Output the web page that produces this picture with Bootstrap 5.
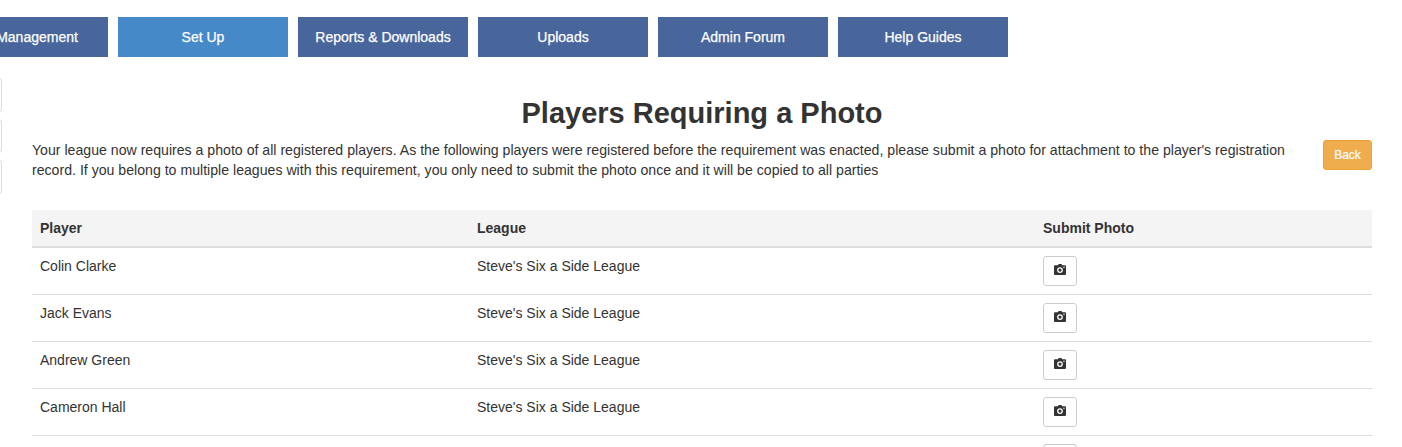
<!DOCTYPE html>
<html lang="en">
<head>
<meta charset="utf-8">
<title>Players Requiring a Photo</title>
<link rel="stylesheet" href="https://cdn.jsdelivr.net/npm/bootstrap@5.3.0/dist/css/bootstrap.min.css">
<style>
html, body { height: 447px; overflow: hidden; }
body { font-family: "Liberation Sans", Arial, sans-serif; font-size: 14px; line-height: 20px; color: #333; background: #fff; }
.top-menu { padding-top: 17px; margin-left: -62px; gap: 10px; }
.menu-btn { width: 170px; height: 40px; line-height: 40px; padding: 0; border: 0; border-radius: 0; font-size: 14px; color: #fff; background: #48659c; text-decoration: none; text-align: center; -webkit-text-stroke: .25px #fff; }
.menu-btn.is-clipped { padding-left: 28px; }
.menu-btn.is-current { background: #4689c8; }
.side-stubs { width: 1px; padding-top: 21px; gap: 7px; flex: none; }
.side-stub { width: 12px; height: 34px; margin-left: -10px; border: 1px solid #ddd; border-radius: 3px; background: #fff; }
.page-body { margin-left: 31px; width: 1340px; flex: none; }
.page-title { font-size: 29px; line-height: 33px; font-weight: 700; color: #333; margin: 40px 0 10px; text-align: center; }
.intro-text { width: 1270px; margin: 0; height: 70px; color: #333; font-size: 14.14px; }
.back-btn { width: 49px; height: 30px; padding: 0; font-size: 12px; line-height: 28px; color: #fff; background: #f0ad4e; border: 1px solid #eea236; border-radius: 3px; -webkit-text-stroke: .2px #fff; }
.photo-table { table-layout: fixed; width: 1340px; margin: 0; color: #333; font-size: 14px; }
.photo-table th, .photo-table td { line-height: 20px; border-color: #ddd; color: #333; box-shadow: none; }
.photo-table thead th { padding: 8px; background: #f4f4f4; border-bottom: 2px solid #ddd; vertical-align: bottom; }
.photo-table tbody td { padding: 8px; height: 47px; vertical-align: top; border-top: 0; border-bottom: 1px solid #ddd; }
.photo-table .col-player { width: 437px; }
.photo-table .col-league { width: 566px; }
.photo-btn { width: 34px; height: 30px; padding: 0; background: #fff; border: 1px solid #ccc; border-radius: 3px; line-height: 1; }
.photo-btn svg { width: 12px; height: 11px; display: block; margin: -4px auto 0; fill: #333; }
</style>
</head>
<body>
<nav class="top-menu d-flex">
  <a class="btn menu-btn is-clipped" href="#">Management</a>
  <a class="btn menu-btn is-current" href="#">Set Up</a>
  <a class="btn menu-btn" href="#">Reports &amp; Downloads</a>
  <a class="btn menu-btn" href="#">Uploads</a>
  <a class="btn menu-btn" href="#">Admin Forum</a>
  <a class="btn menu-btn" href="#">Help Guides</a>
</nav>
<div class="d-flex">
  <div class="side-stubs d-flex flex-column">
    <div class="side-stub"></div>
    <div class="side-stub"></div>
    <div class="side-stub"></div>
  </div>
  <main class="page-body">
    <h1 class="page-title">Players Requiring a Photo</h1>
    <div class="d-flex justify-content-between align-items-start">
      <p class="intro-text">Your league now requires a photo of all registered players. As the following players were registered before the requirement was enacted, please submit a photo for attachment to the player's registration record. If you belong to multiple leagues with this requirement, you only need to submit the photo once and it will be copied to all parties</p>
      <button type="button" class="btn back-btn">Back</button>
    </div>
    <table class="table photo-table">
      <colgroup><col class="col-player"><col class="col-league"><col></colgroup>
      <thead><tr><th>Player</th><th>League</th><th>Submit Photo</th></tr></thead>
      <tbody>
        <tr><td>Colin Clarke</td><td>Steve's Six a Side League</td><td><button type="button" class="btn photo-btn" aria-label="Submit photo"><svg viewBox="0 0 12 11"><path fill-rule="evenodd" d="M4 1.2 4.7 0h2.8l.7 1.2h2.6c.6 0 1.2.5 1.2 1.2v7.3c0 .7-.6 1.3-1.2 1.3H1.2C.5 11 0 10.400 0 9.700V2.400c0-.7.5-1.200 1.200-1.200zM6 3.200a2.900 2.900 0 1 0 0 5.800 2.900 2.900 0 0 0 0-5.800zm0 1.300a1.600 1.600 0 1 1 0 3.200 1.600 1.600 0 0 1 0-3.200zm4-1.900a.7.7 0 1 0 0 1.400.7.7 0 0 0 0-1.400z"/></svg></button></td></tr>
        <tr><td>Jack Evans</td><td>Steve's Six a Side League</td><td><button type="button" class="btn photo-btn" aria-label="Submit photo"><svg viewBox="0 0 12 11"><path fill-rule="evenodd" d="M4 1.2 4.7 0h2.8l.7 1.2h2.6c.6 0 1.2.5 1.2 1.2v7.3c0 .7-.6 1.3-1.2 1.3H1.2C.5 11 0 10.400 0 9.700V2.400c0-.7.5-1.200 1.200-1.200zM6 3.200a2.900 2.900 0 1 0 0 5.800 2.900 2.900 0 0 0 0-5.800zm0 1.300a1.600 1.600 0 1 1 0 3.200 1.600 1.600 0 0 1 0-3.200zm4-1.900a.7.7 0 1 0 0 1.400.7.7 0 0 0 0-1.400z"/></svg></button></td></tr>
        <tr><td>Andrew Green</td><td>Steve's Six a Side League</td><td><button type="button" class="btn photo-btn" aria-label="Submit photo"><svg viewBox="0 0 12 11"><path fill-rule="evenodd" d="M4 1.2 4.7 0h2.8l.7 1.2h2.6c.6 0 1.2.5 1.2 1.2v7.3c0 .7-.6 1.3-1.2 1.3H1.2C.5 11 0 10.400 0 9.700V2.400c0-.7.5-1.200 1.200-1.200zM6 3.200a2.900 2.900 0 1 0 0 5.800 2.900 2.900 0 0 0 0-5.800zm0 1.300a1.600 1.600 0 1 1 0 3.200 1.600 1.600 0 0 1 0-3.200zm4-1.900a.7.7 0 1 0 0 1.400.7.7 0 0 0 0-1.400z"/></svg></button></td></tr>
        <tr><td>Cameron Hall</td><td>Steve's Six a Side League</td><td><button type="button" class="btn photo-btn" aria-label="Submit photo"><svg viewBox="0 0 12 11"><path fill-rule="evenodd" d="M4 1.2 4.7 0h2.8l.7 1.2h2.6c.6 0 1.2.5 1.2 1.2v7.3c0 .7-.6 1.3-1.2 1.3H1.2C.5 11 0 10.400 0 9.700V2.400c0-.7.5-1.200 1.200-1.200zM6 3.200a2.900 2.900 0 1 0 0 5.800 2.900 2.900 0 0 0 0-5.800zm0 1.300a1.600 1.600 0 1 1 0 3.200 1.600 1.600 0 0 1 0-3.200zm4-1.900a.7.7 0 1 0 0 1.400.7.7 0 0 0 0-1.400z"/></svg></button></td></tr>
        <tr><td></td><td></td><td><button type="button" class="btn photo-btn" aria-label="Submit photo"><svg viewBox="0 0 12 11"><path fill-rule="evenodd" d="M4 1.2 4.7 0h2.8l.7 1.2h2.6c.6 0 1.2.5 1.2 1.2v7.3c0 .7-.6 1.3-1.2 1.3H1.2C.5 11 0 10.400 0 9.700V2.400c0-.7.5-1.200 1.200-1.200zM6 3.200a2.900 2.900 0 1 0 0 5.800 2.900 2.900 0 0 0 0-5.800zm0 1.300a1.600 1.600 0 1 1 0 3.200 1.600 1.600 0 0 1 0-3.200zm4-1.900a.7.7 0 1 0 0 1.400.7.7 0 0 0 0-1.400z"/></svg></button></td></tr>
      </tbody>
    </table>
  </main>
</div>
<script src="https://cdn.jsdelivr.net/npm/bootstrap@5.3.0/dist/js/bootstrap.bundle.min.js"></script>
</body>
</html>
